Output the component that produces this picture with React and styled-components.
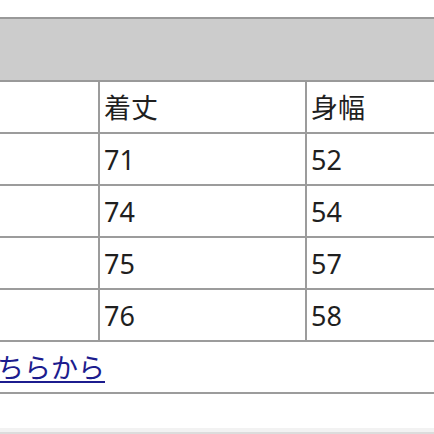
import React from 'react';
import styled, { createGlobalStyle } from 'styled-components';

const GlobalStyle = createGlobalStyle`
  html, body {
    margin: 0;
    padding: 0;
    background: #ffffff;
    overflow: hidden;
  }
  body {
    font-family: "Noto Sans", "Noto Sans CJK JP", sans-serif;
  }
`;

const Page = styled.div`
  width: 434px;
  height: 434px;
  overflow: hidden;
  padding-top: 17px;
  box-sizing: border-box;
`;

const SizeTable = styled.table`
  border-collapse: collapse;
  table-layout: fixed;
  width: 640px;
  margin-left: -116px;
  font-size: 27px;
  color: #1f1f1f;
`;

const Caption = styled.td`
  background: #cccccc;
  border: 2px solid #999999;
  height: 61px;
  padding: 0;
`;

const Cell = styled.td`
  border: 2px solid #9c9c9c;
  height: 50px;
  padding: 0 4px;
  line-height: 1;
  vertical-align: middle;
  white-space: nowrap;
`;

const LinkCell = styled(Cell)`
  border-left: none;
  border-right: none;
`;

const MoreLink = styled.a`
  color: #1c1c8e;
  text-decoration: underline;
  text-decoration-thickness: 2px;
  text-underline-offset: 3px;
`;

const Footer = styled.div`
  margin-top: 34px;
  height: 4px;
  background: #f2f2f2;
  border-bottom: 2px solid #dcdcdc;
`;

const rows = [
  ['71', '52'],
  ['74', '54'],
  ['75', '57'],
  ['76', '58'],
];

export default function App() {
  return (
    <>
      <GlobalStyle />
      <Page>
        <SizeTable>
          <colgroup>
            <col style={{ width: 214 }} />
            <col style={{ width: 207 }} />
            <col />
          </colgroup>
          <tbody>
            <tr>
              <Caption colSpan={3} />
            </tr>
            <tr>
              <Cell></Cell>
              <Cell>着丈</Cell>
              <Cell>身幅</Cell>
            </tr>
            {rows.map((r) => (
              <tr key={r[0]}>
                <Cell></Cell>
                <Cell>{r[0]}</Cell>
                <Cell>{r[1]}</Cell>
              </tr>
            ))}
            <tr>
              <LinkCell colSpan={3}>
                <MoreLink href="#">詳細はこちらから</MoreLink>
              </LinkCell>
            </tr>
          </tbody>
        </SizeTable>
        <Footer />
      </Page>
    </>
  );
}
